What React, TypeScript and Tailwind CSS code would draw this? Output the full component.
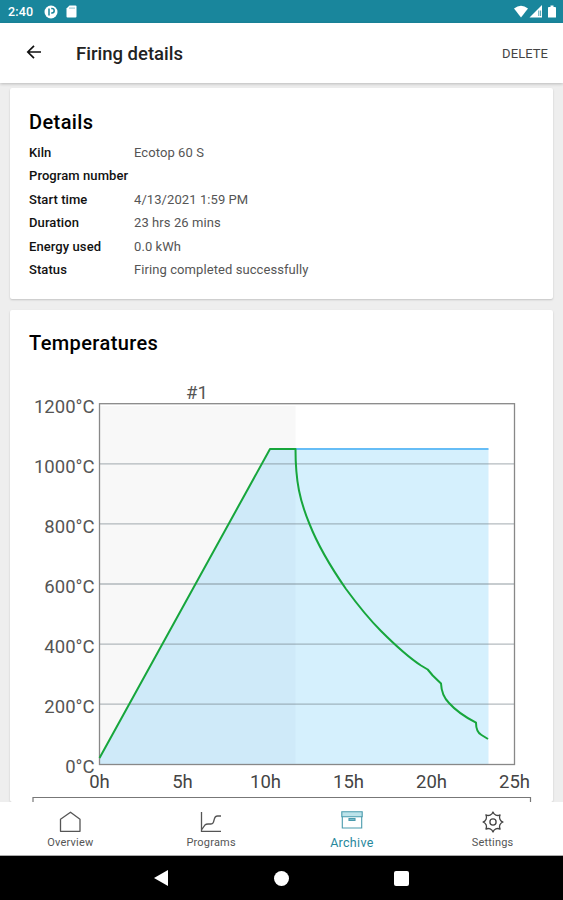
import type { ReactNode } from "react";
import { clsx } from "clsx";

const DETAILS = [
  { label: "Kiln", value: "Ecotop 60 S" },
  { label: "Program number", value: "" },
  { label: "Start time", value: "4/13/2021 1:59 PM" },
  { label: "Duration", value: "23 hrs 26 mins" },
  { label: "Energy used", value: "0.0 kWh" },
  { label: "Status", value: "Firing completed successfully" },
];

const Y_TICKS = [1200, 1000, 800, 600, 400, 200, 0];
const X_TICKS = [0, 5, 10, 15, 20, 25];

// plot area inside the chart's own coordinates
const LEFT = 89.5;
const TOP = 33.7;
const STEP_X = 83;
const STEP_Y = 60.1;

const MEASURED =
  "M89.5 388L260 79H285.5C285.5 112 290 131 299.5 154C307 173 320 196 336 219C347 234 358 248 371 261C386 276 398 287 411 295.5L417.7 299.5L422.7 305.5L431 313.5C431.4 322 434 328 439 333C447 342 457 348 466 352.7C466 359 468 363 471.5 365L478 369";

function StatusBar() {
  return (
    <div className="flex h-[23px] shrink-0 items-center bg-[#19869c] px-2 pb-px text-white">
      <span className="w-[36px] pt-0.5 text-[12.5px] leading-none font-medium tracking-[0.2px]">2:40</span>
      <svg width="14" height="14" viewBox="0 0 14 14" className="mt-px">
        <circle cx="7" cy="7" r="6.5" fill="white" />
        <path d="M5 10.5V3.5M7.2 3.5H8A2.2 2.2 0 0 1 8 7.9H7.2" fill="none" stroke="#19869c" strokeWidth="1.5" />
      </svg>
      <svg width="11" height="13" viewBox="0 0 11 13" className="ml-2 mt-px">
        <path d="M3.5 .5H9.5Q10.5 .5 10.5 1.5V11.5Q10.5 12.5 9.5 12.5H1.5Q.5 12.5 .5 11.5V3.5Z" fill="white" />
        <path d="M4 2.3V4M6 2.3V4M8 2.3V4" stroke="#19869c" strokeWidth=".6" />
      </svg>
      <svg width="43" height="14" viewBox="0 0 43 14" className="ml-auto mt-0.5 -mr-0.5">
        <path d="M0 3.5Q7 -2 14 3.5L7 12.5Z" fill="white" />
        <path d="M28 0V12.5H15.5Z" fill="white" />
        <path d="M24.8 5.5V11M26.6 5.5V11" stroke="#19869c" strokeWidth=".8" />
        <path d="M34.8 2H36.5V.5H39.5V2H41.2Q42 2 42 3V12.5H34V3Q34 2 34.8 2Z" fill="white" />
      </svg>
    </div>
  );
}

function AppBar() {
  return (
    <header className="relative z-10 flex h-[60px] shrink-0 items-center bg-white pl-[26px] pr-[15px] shadow-[0_1px_3px_rgba(0,0,0,0.22)]">
      <svg width="16" height="16" viewBox="0 0 16 16" className="-mt-[2px]" fill="none" stroke="#111" strokeWidth="1.7">
        <path d="M15 8H2M8 1.8L1.8 8L8 14.2" />
      </svg>
      <h1 className="ml-[34px] mt-1 text-[18.5px] font-medium text-[#222]">Firing details</h1>
      <button className="ml-auto mt-0.5 text-[13px] tracking-[0.05px] text-[#444]">DELETE</button>
    </header>
  );
}

function Card({ title, className, children }: { title: string; className?: string; children: ReactNode }) {
  return (
    <section className={clsx("shrink-0 rounded-[2px] bg-white shadow-[0_1px_2px_rgba(0,0,0,0.18)]", className)}>
      <h2 className="pl-[19px] text-[20px] leading-[24px] font-medium tracking-[0.4px] text-black">{title}</h2>
      {children}
    </section>
  );
}

function TemperatureChart() {
  return (
    <svg width="543" height="432" viewBox="0 0 543 432" className="mt-[15px] block" fontSize="18.5" fill="#555">
      <rect x={LEFT} y="36" width="196" height="358" fill="#f8f8f8" />
      <path d="M89.5 388L260 79H478.5V394.5H89.5Z" fill="#d5f0fd" />
      <path d="M89.5 388L260 79H285.5V394.5H89.5Z" fill="#cfeaf9" />
      {Y_TICKS.map((t, i) => (
        <g key={t}>
          {i > 0 && i < 6 && (
            <path d={`M${LEFT} ${TOP + i * STEP_Y}H504.5`} stroke="#6b7780" strokeOpacity="0.5" strokeWidth="1.3" />
          )}
          <text x="84.5" y={TOP + i * STEP_Y + 9} textAnchor="end">{t}°C</text>
        </g>
      ))}
      <rect x={LEFT} y={TOP} width="415" height="360.8" fill="none" stroke="#888" strokeWidth="1.3" />
      <path d="M285 79H478.5" stroke="#66bdf6" strokeWidth="2.2" />
      <path d={MEASURED} fill="none" stroke="#17a63c" strokeWidth="2" strokeLinejoin="round" />
      <text x="187" y="28.5" textAnchor="middle">#1</text>
      {X_TICKS.map((t, i) => (
        <text key={t} x={LEFT + i * STEP_X} y="418" textAnchor="middle" fill="#444">{t}h</text>
      ))}
      <path d="M23 433V427.5H520.5V433" fill="none" stroke="#777" strokeWidth="1.2" />
    </svg>
  );
}

function OverviewIcon() {
  return (
    <svg width="22" height="22" viewBox="0 0 22 22" fill="none" stroke="#555" strokeWidth="1.3">
      <path d="M1.5 8.2L11.5 1.2L21 8.2V20.3H1.5Z" strokeLinejoin="round" />
    </svg>
  );
}

function ProgramsIcon() {
  return (
    <svg width="22" height="22" viewBox="0 0 22 22" fill="none" stroke="#555" strokeWidth="1.3">
      <path d="M1.5 1V20.3H21M1.5 19L5 14Q6 13 8 13H11Q13 13 13.5 11L14.5 7.5Q15.2 5 17.5 5H21" />
    </svg>
  );
}

function ArchiveIcon() {
  return (
    <svg width="22" height="22" viewBox="0 0 22 22" fill="none" stroke="#4a9bad" strokeWidth="1.1">
      <path d="M.8 .8H21.2V5.8H.8Z" fill="#bde3ea" />
      <path d="M1.3 5.8V17H20.7V5.8" />
      <path d="M8 7.5H14V9.5H8Z" fill="#79bccb" />
    </svg>
  );
}

function SettingsIcon() {
  return (
    <svg width="22" height="22" viewBox="0 0 22 22" fill="none" stroke="#444" strokeWidth="1.3" strokeLinejoin="round">
      <path d="M11 1A5 5 0 0 0 18.07 3.93A5 5 0 0 0 21 11A5 5 0 0 0 18.07 18.07A5 5 0 0 0 11 21A5 5 0 0 0 3.93 18.07A5 5 0 0 0 1 11A5 5 0 0 0 3.93 3.93A5 5 0 0 0 11 1Z" />
      <circle cx="11" cy="11" r="3.1" />
    </svg>
  );
}

const TABS = [
  { label: "Overview", icon: OverviewIcon },
  { label: "Programs", icon: ProgramsIcon },
  { label: "Archive", icon: ArchiveIcon, active: true },
  { label: "Settings", icon: SettingsIcon },
];

function TabBar() {
  return (
    <nav className="grid h-[54px] shrink-0 grid-cols-4 border-b border-[#aaa] bg-white">
      {TABS.map((tab) => {
        const Icon = tab.icon;
        return (
          <button key={tab.label} className="flex flex-col items-center pt-[9px]">
            <Icon />
            <span
              className={clsx(
                "mt-0.5 leading-[16px]",
                tab.active ? "text-[12.5px] tracking-[0.3px] text-[#27889c]" : "text-[11px] tracking-[0.2px] text-[#555]"
              )}
            >
              {tab.label}
            </span>
          </button>
        );
      })}
    </nav>
  );
}

function SystemNav() {
  return (
    <div className="flex h-11 shrink-0 items-center justify-center gap-[105px] bg-black">
      <svg width="15" height="16" viewBox="0 0 15 16" fill="white">
        <path d="M0 8L14 0V16Z" />
      </svg>
      <div className="size-[15px] rounded-full bg-white" />
      <div className="size-[15px] rounded-[2px] bg-white" />
    </div>
  );
}

export default function App() {
  return (
    <div className="flex h-[900px] w-[563px] flex-col overflow-hidden bg-[#eee] font-[Roboto,sans-serif]">
      <StatusBar />
      <AppBar />
      <main className="flex min-h-0 flex-1 flex-col gap-[11px] overflow-hidden px-[10px] pt-[5px]">
        <Card title="Details" className="h-[211px] pt-[22px]">
          <dl className="mt-[7px] pl-[19px]">
            {DETAILS.map((row) => (
              <div key={row.label} className="flex h-[23.4px] items-center text-[13px] tracking-[0.08px]">
                <dt className="w-[105px] whitespace-nowrap font-medium text-[#111]">{row.label}</dt>
                <dd className="text-[#555]">{row.value}</dd>
              </div>
            ))}
          </dl>
        </Card>
        <Card title="Temperatures" className="pt-[21px]">
          <TemperatureChart />
        </Card>
      </main>
      <TabBar />
      <SystemNav />
    </div>
  );
}
